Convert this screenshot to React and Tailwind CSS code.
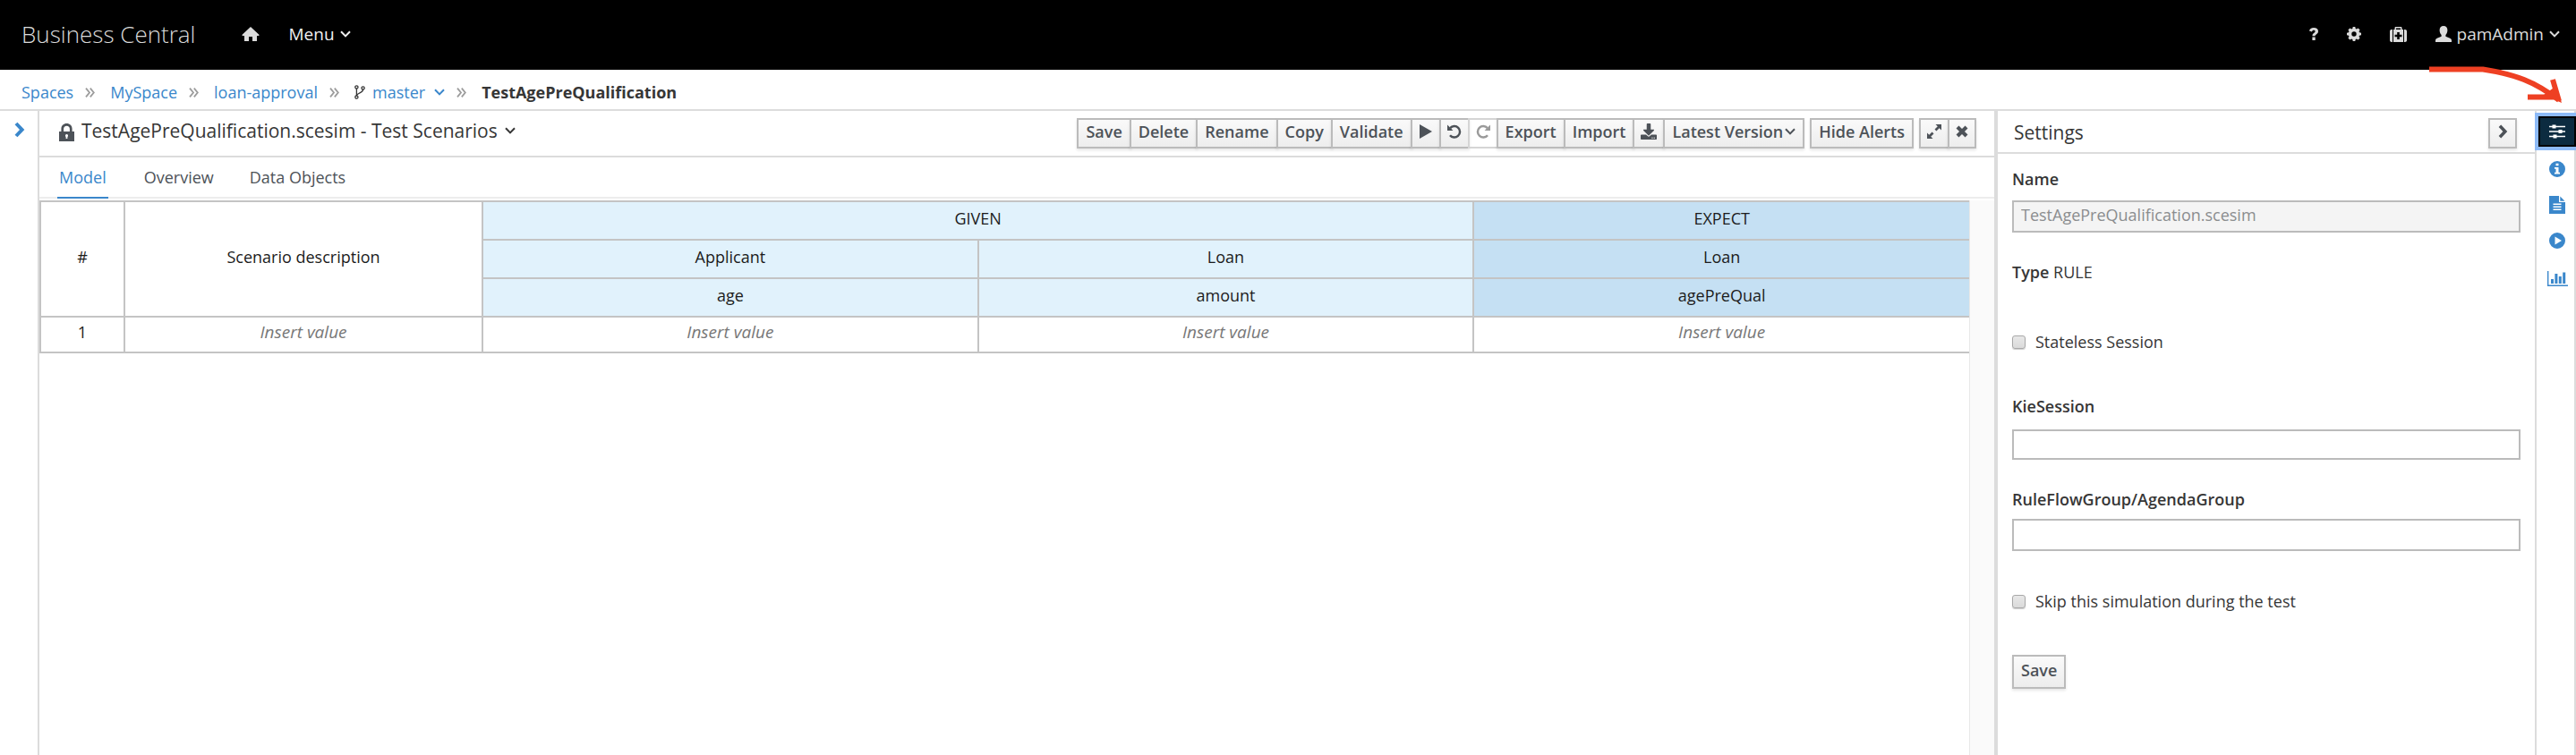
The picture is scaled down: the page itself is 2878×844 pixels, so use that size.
import { useState } from "react";
import { FaDownload } from "react-icons/fa";

function Icon({ box, className, children }) {
  return (
    <svg viewBox={box} className={className} fill="currentColor" aria-hidden="true">
      {children}
    </svg>
  );
}

const Chevron = ({ className }) => (
  <svg viewBox="0 0 12 8" className={className} fill="none" stroke="currentColor" strokeWidth="2" aria-hidden="true">
    <path d="M1 1.2 6 6.4 11 1.2" />
  </svg>
);

const AngleRight = ({ className }) => (
  <svg viewBox="0 0 12 18" className={className} fill="none" stroke="currentColor" strokeWidth="4" aria-hidden="true">
    <path d="M2 2 8.6 9 2 16" />
  </svg>
);

const Home = () => (
  <Icon box="0 0 20 18" className="h-[18px] w-5">
    <path d="M10 1 .6 9.800V11h2.400v6h5v-5h4v5h5v-6h2.400V9.800Z" />
  </Icon>
);

const Question = () => (
  <Icon box="0 0 10 14" className="h-[14px] w-[10px]">
    <path d="M0 3.6C.5 1.400 2.200 0 5 0c3 0 5 1.600 5 4 0 1.700-1 2.700-2.200 3.500-.9.6-1.200.9-1.200 1.700H3.500c0-1.900.6-2.600 1.900-3.500.8-.5 1.200-.9 1.200-1.600 0-.8-.6-1.300-1.600-1.300-1.100 0-1.700.6-2 1.700ZM3.400 10.600h3.300V14H3.400Z" />
  </Icon>
);

const Gear = () => (
  <Icon box="0 0 16 16" className="size-4">
    <path
      fillRule="evenodd"
      d="M6.700 0h2.600l.4 2 1.200.5L12.600 1.400l2 2-1.100 1.700.5 1.200 2 .4v2.600l-2 .4-.5 1.200 1.100 1.700-2 2-1.700-1.100-1.200.5-.4 2H6.700l-.4-2-1.200-.5-1.700 1.100-2-2 1.100-1.700-.5-1.200-2-.4V6.700l2-.4.5-1.200L1.400 3.400l2-2 1.700 1.100 1.200-.5ZM8 5.300a2.700 2.700 0 1 0 0 5.400 2.700 2.700 0 0 0 0-5.400Z"
    />
  </Icon>
);

const Medkit = () => (
  <Icon box="0 0 19 17" className="h-[17px] w-[19px]">
    <path
      fillRule="evenodd"
      d="M5.500 3V1.300C5.500.5 6 0 6.800 0h5.400c.8 0 1.300.5 1.300 1.300V3H15v14H4V3ZM7 3h5V1.500H7ZM8.200 6v2.700H5.500v2.600h2.700V14h2.600v-2.700h2.700V8.700h-2.700V6ZM3 3v14H2c-1.200 0-2-.8-2-2V5c0-1.200.8-2 2-2ZM16 3h1c1.200 0 2 .8 2 2v10c0 1.200-.8 2-2 2h-1Z"
    />
  </Icon>
);

const User = () => (
  <Icon box="0 0 18 18" className="size-[18px]">
    <path d="M9 0c2.800 0 4.400 2 4.400 4.800 0 2-.8 4-2 5.200v1.800l4.800 1.900C17.400 14.200 18 15 18 16.200V18H0v-1.800c0-1.200.6-2 1.800-2.500l4.800-1.900V10c-1.200-1.200-2-3.200-2-5.200C4.600 2 6.200 0 9 0Z" />
  </Icon>
);

const Fork = () => (
  <svg viewBox="0 0 12 16" className="h-4 w-3 text-[#363636]" fill="none" stroke="currentColor" strokeWidth="1.300" aria-hidden="true">
    <circle cx="2.400" cy="2.400" r="1.600" />
    <circle cx="2.400" cy="13.600" r="1.600" />
    <circle cx="9.600" cy="3.400" r="1.600" />
    <path d="M2.400 4v8M9.600 5c0 4.600-6.600 3-7.200 7" />
  </svg>
);

const Lock = () => (
  <Icon box="0 0 17 20" className="mt-1 h-5 w-[17px] text-[#4d5258]">
    <path
      fillRule="evenodd"
      d="M2.400 9V6C2.400 2.400 5 0 8.500 0s6.100 2.400 6.100 6v3H17v11H0V9Zm2.700 0h6.800V6c0-2-1.300-3.300-3.400-3.300S5.100 4 5.100 6Zm3.400 3a1.600 1.600 0 0 0-.9 2.900V17h1.800v-2.100A1.600 1.600 0 0 0 8.500 12Z"
    />
  </Icon>
);

const Play = () => (
  <Icon box="0 0 14 16" className="h-4 w-[14px]">
    <path d="M0 0 14 8 0 16Z" />
  </Icon>
);

const Undo = ({ flip }) => (
  <svg viewBox="0 0 16 16" className={flip ? "size-4 -scale-x-100" : "size-4"} aria-hidden="true">
    <path d="M3.200 4.200A6.200 6.200 0 1 1 3 12.200" fill="none" stroke="currentColor" strokeWidth="2.500" />
    <path d="M0 .6V7h6.400Z" fill="currentColor" />
  </svg>
);

const Expand = () => (
  <svg viewBox="0 0 16 16" className="size-4" aria-hidden="true">
    <path d="M9.500 0H16v6.500l-2.300-2.300-3.300 3.300-1.900-1.900 3.300-3.300ZM6.500 16H0V9.500l2.300 2.300 3.300-3.300 1.900 1.900-3.300 3.300Z" fill="currentColor" />
  </svg>
);

const Close = () => (
  <svg viewBox="0 0 14 14" className="size-[14px]" fill="none" stroke="currentColor" strokeWidth="4.200" aria-hidden="true">
    <path d="m2 2 10 10M12 2 2 12" />
  </svg>
);

const Sliders = () => (
  <Icon box="0 0 18 16" className="h-4 w-[18px]">
    <path d="M0 1.800h18v1.400H0ZM0 7.300h18v1.400H0ZM0 12.800h18v1.400H0Z" />
    <path d="M3.500.5h4v4h-4ZM10.500 6h4v4h-4ZM4.500 11.500h4v4h-4Z" />
  </Icon>
);

const Info = () => (
  <Icon box="0 0 18 18" className="size-[18px]">
    <path
      fillRule="evenodd"
      d="M9 0a9 9 0 1 1 0 18A9 9 0 0 1 9 0ZM7.500 2.700v2.600h3V2.700ZM6 7v1.700h1.500v4H6v1.800h6v-1.800h-1.500V7Z"
    />
  </Icon>
);

const Doc = () => (
  <Icon box="0 0 18 20" className="h-5 w-[18px]">
    <path
      fillRule="evenodd"
      d="M0 0h11v7h7v13H0ZM4.500 8.500V10h9V8.500Zm0 3V13h9v-1.500Zm0 3V16h9v-1.500Z"
    />
    <path d="M12.300.6 17.400 5.700H12.300Z" />
  </Icon>
);

const PlayCircle = () => (
  <Icon box="0 0 18 18" className="size-[18px]">
    <path fillRule="evenodd" d="M9 0a9 9 0 1 1 0 18A9 9 0 0 1 9 0ZM6.500 4.500v9L14 9Z" />
  </Icon>
);

const BarChart = () => (
  <Icon box="0 0 23 17" className="mt-1 h-[17px] w-[23px]">
    <path d="M0 0h1.400v15.600H23V17H0ZM4 9h3v5H4ZM8.400 3h3v11h-3ZM12.800 6h3v8h-3ZM17.200 1.500h3V14h-3Z" />
  </Icon>
);

const Separator = () => (
  <svg viewBox="0 0 11 11" className="mr-[17px] ml-[13px] size-[11px] text-[#9c9c9c]" fill="none" stroke="currentColor" strokeWidth="1.800" aria-hidden="true">
    <path d="m1 .6 4 4.900-4 4.900M5.800.6l4 4.900-4 4.900" />
  </svg>
);

const btn =
  "flex h-[34px] items-center justify-center border-2 border-[#bbb] bg-linear-to-b from-[#fafafa] to-[#ededed] pb-1 text-lg leading-6 font-semibold text-[#4d5258] shadow-[0_2px_3px_rgba(3,3,3,0.1)]";

function Tool({ className = "px-2", label, children, disabled }) {
  return (
    <button
      type="button"
      aria-label={label}
      disabled={disabled}
      className={`${btn} -ml-0.5 first:ml-0 disabled:border-[#d5d5d5] disabled:bg-none disabled:text-[#9a9a9a] disabled:shadow-none ${className}`}
    >
      {children}
    </button>
  );
}

function TopBar() {
  return (
    <header className="flex h-[78px] items-center bg-black pr-[18px] pb-0.5 pl-6 text-[#dbdbdb]">
      <a href="#home" className="text-[26px] leading-8 font-light">Business Central</a>
      <nav className="ml-[52px] flex items-center gap-8 text-[19px] leading-6">
        <a href="#home" aria-label="Home"><Home /></a>
        <button type="button" className="flex items-center gap-1.5 text-[#f0f0f0]">
          Menu <Chevron className="h-2 w-3" />
        </button>
      </nav>
      <div className="ml-auto flex items-center text-[19px] leading-6">
        <button type="button" aria-label="Help"><Question /></button>
        <button type="button" aria-label="Settings" className="ml-8"><Gear /></button>
        <button type="button" aria-label="Support" className="ml-8"><Medkit /></button>
        <button type="button" className="ml-8 flex items-center gap-1.5">
          <User /> pamAdmin <Chevron className="h-2 w-3" />
        </button>
      </div>
    </header>
  );
}

function Breadcrumb() {
  return (
    <nav aria-label="Breadcrumb" className="relative flex h-[46px] items-center border-b-2 border-[#dcdcdc] px-6 pt-1.5 text-lg leading-6 text-[#3a87cb]">
      <a href="#spaces">Spaces</a>
      <Separator />
      <a href="#myspace">MySpace</a>
      <Separator />
      <a href="#loan">loan-approval</a>
      <Separator />
      <button type="button" className="flex items-center gap-2">
        <Fork /> master <Chevron className="ml-0.5 h-2 w-3" />
      </button>
      <Separator />
      <span className="font-bold text-[#363636]">TestAgePreQualification</span>
      <svg viewBox="0 0 152 46" className="absolute -top-1.5 right-3.5 z-10 h-[46px] w-[152px]" fill="none" stroke="#ee4023" strokeWidth="6" aria-hidden="true">
        <path d="M2 5.500h60C98 11 120 19 147 40M140 17l7 24M112 36.500h32" />
        <path d="m130 34 14-10 6 19Z" fill="#ee4023" stroke="none" />
      </svg>
    </nav>
  );
}

function EditorHeader() {
  return (
    <div className="flex h-[52px] shrink-0 items-start border-b-2 border-[#dcdcdc] pt-2 pr-5 pl-[22px]">
      <button type="button" className="flex h-8 items-center gap-2 pb-1 text-[21px] leading-7 text-[#363636]">
        <Lock /> TestAgePreQualification.scesim - Test Scenarios <Chevron className="h-2 w-3" />
      </button>
      <div className="ml-auto flex">
        <Tool>Save</Tool>
        <Tool>Delete</Tool>
        <Tool>Rename</Tool>
        <Tool>Copy</Tool>
        <Tool>Validate</Tool>
        <Tool label="Run" className="w-[34px]"><Play /></Tool>
        <Tool label="Undo" className="w-[34px]"><Undo /></Tool>
        <Tool label="Redo" className="w-[34px]" disabled><Undo flip /></Tool>
        <Tool>Export</Tool>
        <Tool>Import</Tool>
        <Tool label="Download" className="w-9"><FaDownload className="size-[18px]" /></Tool>
        <Tool className="gap-0.5 px-2">Latest Version <Chevron className="h-2 w-3" /></Tool>
      </div>
      <div className="ml-1.5 flex"><Tool>Hide Alerts</Tool></div>
      <div className="ml-1.5 flex">
        <Tool label="Expand" className="w-[34px]"><Expand /></Tool>
        <Tool label="Close" className="w-8"><Close /></Tool>
      </div>
    </div>
  );
}

function Tabs() {
  return (
    <div role="tablist" className="flex h-[46px] shrink-0 gap-10 border-b-2 border-[#ededed] pl-5 text-lg leading-6 text-[#4d5258]">
      <button type="button" role="tab" aria-selected="true" className="-mb-0.5 border-b-2 border-[#3a87cb] px-0.5 text-[#3a87cb]">Model</button>
      <button type="button" role="tab" aria-selected="false">Overview</button>
      <button type="button" role="tab" aria-selected="false">Data Objects</button>
    </div>
  );
}

function Grid() {
  const cell = "border-2 border-[#c4c4c4] px-0 pt-0 pb-1.5 text-center font-normal";
  const given = `${cell} bg-[#e1f2fc]`;
  const expect = `${cell} border-r-0 bg-[#c5e0f3]`;
  const value = `${cell} text-[19px] text-[#777] italic`;
  return (
    <table className="w-full table-fixed border-collapse text-lg leading-6 text-[#1c1c1c]">
      <colgroup>
        <col className="w-[94px]" />
        <col className="w-[400px]" />
        <col />
        <col />
        <col />
      </colgroup>
      <thead>
        <tr className="h-[43px]">
          <th rowSpan={3} className={cell}>#</th>
          <th rowSpan={3} className={cell}>Scenario description</th>
          <th colSpan={2} className={given}>GIVEN</th>
          <th className={expect}>EXPECT</th>
        </tr>
        <tr className="h-[43px]">
          <th className={given}>Applicant</th>
          <th className={given}>Loan</th>
          <th className={expect}>Loan</th>
        </tr>
        <tr className="h-[43px]">
          <th className={given}>age</th>
          <th className={given}>amount</th>
          <th className={expect}>agePreQual</th>
        </tr>
      </thead>
      <tbody>
        <tr className="h-10">
          <td className={cell}>1</td>
          <td className={value}>Insert value</td>
          <td className={value}>Insert value</td>
          <td className={value}>Insert value</td>
          <td className={`${value} border-r-0`}>Insert value</td>
        </tr>
      </tbody>
    </table>
  );
}

const field = "block w-full border-2 border-[#bbb] px-2 text-lg leading-6";
const check =
  "size-[15px] appearance-none rounded-[3px] border border-[#a8a8a8] bg-linear-to-b from-[#e8e8e8] to-[#dadada] shadow-[0_1px_1px_rgba(0,0,0,0.2)] checked:bg-[#3a87cb] checked:bg-none";

function Settings() {
  const [stateless, setStateless] = useState(false);
  const [skip, setSkip] = useState(false);
  return (
    <aside className="w-[606px] shrink-0 border-r-2 border-l-4 border-[#dcdcdc] text-lg leading-6 text-[#363636]">
      <div className="flex h-12 items-start justify-between border-b-2 border-[#dcdcdc] pt-2 pr-5 pl-[18px]">
        <h2 className="text-[21px] leading-8">Settings</h2>
        <button type="button" aria-label="Collapse" className={`${btn} w-8`}><AngleRight className="h-4 w-[11px]" /></button>
      </div>
      <form className="px-4 pt-4" onSubmit={(e) => e.preventDefault()}>
        <label htmlFor="name" className="block font-semibold">Name</label>
        <input id="name" disabled defaultValue="TestAgePreQualification.scesim" className={`${field} mt-3 h-9 bg-[#f4f4f4] pb-1 text-[#8b8d8f]`} />
        <p className="mt-8"><span className="font-semibold">Type</span> RULE</p>
        <div className="mt-[54px] flex items-center gap-[11px]">
          <input id="stateless" type="checkbox" checked={stateless} onChange={(e) => setStateless(e.target.checked)} className={check} />
          <label htmlFor="stateless">Stateless Session</label>
        </div>
        <label htmlFor="kie" className="mt-12 block font-semibold">KieSession</label>
        <input id="kie" className={`${field} mt-3.5 h-[34px]`} />
        <label htmlFor="group" className="mt-8 block font-semibold">RuleFlowGroup/AgendaGroup</label>
        <input id="group" className={`${field} mt-2.5 h-9`} />
        <div className="mt-11 flex items-center gap-[11px]">
          <input id="skip" type="checkbox" checked={skip} onChange={(e) => setSkip(e.target.checked)} className={check} />
          <label htmlFor="skip">Skip this simulation during the test</label>
        </div>
        <button type="submit" className={`${btn} mt-12 h-[38px] px-2`}>Save</button>
      </form>
    </aside>
  );
}

function Rail() {
  return (
    <div className="flex w-11 shrink-0 flex-col items-end border-r-2 border-[#dcdcdc] text-[#3a87cb]">
      <button type="button" aria-label="Settings" className="-mr-0.5 mt-1.5 mb-4 flex h-[34px] w-[42px] items-center justify-center border-2 border-black bg-[#0c2b40] text-white shadow-[0_0_0_4px_#8dbaf7]">
        <Sliders />
      </button>
      <div className="flex w-full flex-col items-center gap-[21px] pl-1">
        <button type="button" aria-label="Info"><Info /></button>
        <button type="button" aria-label="Document"><Doc /></button>
        <button type="button" aria-label="Run"><PlayCircle /></button>
        <button type="button" aria-label="Coverage"><BarChart /></button>
      </div>
    </div>
  );
}

export default function App() {
  return (
    <div className="flex min-h-screen flex-col bg-white font-['Open_Sans',sans-serif]">
      <TopBar />
      <Breadcrumb />
      <div className="flex grow overflow-hidden">
        <div className="flex w-11 shrink-0 items-start border-r-2 border-[#dcdcdc] pt-3 pl-4">
          <button type="button" aria-label="Open panel" className="text-[#3a87cb]"><AngleRight className="h-[18px] w-3" /></button>
        </div>
        <main className="flex min-w-0 grow flex-col">
          <EditorHeader />
          <Tabs />
          <div className="mt-0.5 flex grow">
            <div className="min-w-0 grow"><Grid /></div>
            <div className="w-7 shrink-0 border-l border-[#e8e8e8] bg-[#fafafa]" />
          </div>
        </main>
        <Settings />
        <Rail />
      </div>
    </div>
  );
}
